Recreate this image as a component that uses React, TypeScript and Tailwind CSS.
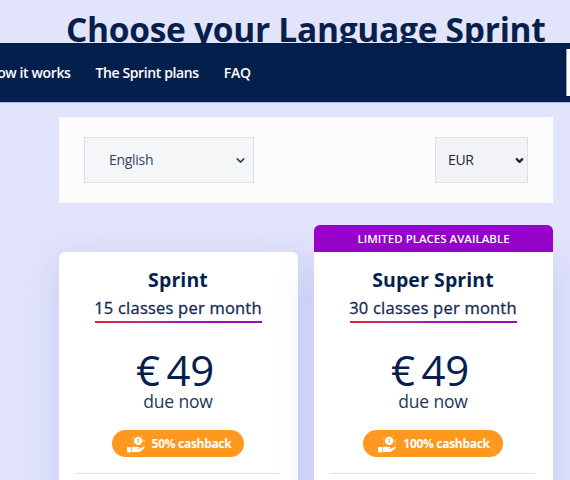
import { ChevronDown } from "lucide-react";

const CashbackIcon = () => (
  <svg width="20" height="20" viewBox="0 0 20 20" fill="none" className="shrink-0">
    <path d="M1 13h4v5.4H1z" fill="#fff" />
    <path
      d="M5.6 13.4c1.6-1.3 3-1.3 4.6-.3h2.3c1.2 0 1.2 1.7 0 1.7H10c1.3.5 2.6.5 3.8-.1l3.5-2c1.2-.5 2 .6 1.1 1.5l-4.2 3.3c-.6.4-1.2.6-2 .6H8.6l-3 .2z"
      fill="#fff"
    />
    <circle cx="12.2" cy="6.9" r="4.2" fill="#fff" />
    <path d="M13.4 5.6c-1.5-1-2.7.5-1.2 1.2s.4 2.4-1.3 1.3M12.2 4.5v4.8" stroke="#ffa63d" strokeWidth=".6" />
    <path d="M6.4 5.2c.3-1.4 1-2.3 2-3M15.8 1.6l1 1M18 5.4v2.8M17.4 10l.8.8M6.4 8.8l.4 1.1" stroke="#fff" strokeWidth=".7" />
  </svg>
);

type PlanProps = {
  name: string;
  classes: string;
  price: string;
  cashback: string;
  banner?: string;
};

const Plan = ({ name, classes, price, cashback, banner }: PlanProps) => (
  <div className="w-[239px]">
    {banner ? (
      <div className="h-[27px] rounded-t-md bg-[#9900cb] text-center text-[11.5px] leading-[28px] font-semibold text-white">
        <span>{banner}</span>
      </div>
    ) : (
      <div className="h-[27px]" />
    )}
    <div
      className={`flex h-[300px] flex-col items-center bg-white pt-[14px] pr-[17px] pl-4 shadow-[0_10px_36px_rgba(80,95,205,0.2)] ${banner ? "" : "rounded-t-md"}`}
    >
      <h2 className="text-[19.5px] leading-[28px] font-bold tracking-[0.1px]">{name}</h2>
      <div className="text-[16.5px] leading-[27px] tracking-[0.22px] text-[#14294f] [-webkit-text-stroke:0.3px]">{classes}</div>
      <div className="h-[2px] w-[167px] bg-linear-to-r from-[#dc2128] via-[#a414b0] to-[#8a12b5]" />
      <div className="mt-[24px] mr-[6px] text-[42px] leading-[46px] tracking-[-0.3px] [word-spacing:-4px]">{price}</div>
      <div className="-mt-[4px] text-[17.5px] leading-[24px] tracking-[-0.15px] text-[#26375a]">due now</div>
      <div className="mt-[17px] flex h-[27px] items-center gap-[6px] rounded-full bg-[#ff981f] pr-[13px] pl-[14px] text-[12px] font-bold tracking-[-0.3px] text-white">
        <CashbackIcon />
        <span className="mt-px">{cashback}</span>
      </div>
      <div className="mt-[16px] h-px w-full bg-[#e0e2e8]" />
    </div>
  </div>
);

const App = () => {
  return (
    <div className="h-[480px] w-[570px] overflow-hidden bg-[#e2e4fb] font-['Open_Sans',sans-serif] text-[#071f4c]">
      <div className="h-[43px] overflow-hidden pt-[9px] pl-[66px]">
        <h1 className="text-[33.5px] leading-[40px] font-bold tracking-[-0.28px] whitespace-nowrap">Choose your Language Sprint</h1>
      </div>

      <nav className="flex h-[59px] items-center justify-between bg-[#051f4c] text-[14px] font-semibold text-white shadow-[0_1px_0_#adbdeb]">
        <div className="-ml-[13px] flex gap-[25px] tracking-[-0.38px] whitespace-nowrap">
          <a>How it works</a>
          <a>The Sprint plans</a>
          <a className="tracking-[-0.3px]">FAQ</a>
        </div>
        <div className="h-[47px] w-[4px] border-l border-[#98a2bb] bg-white" />
      </nav>

      <main className="mt-[15px] ml-[59px] w-[494px]">
        <div className="flex h-[86px] items-center justify-between bg-[#fcfcfd] px-[25px]">
          <button className="flex h-[46px] w-[170px] items-center justify-between border border-[#d5e0eb] bg-[#f4f6f8] pr-[6px] pl-[24px] text-[14px] tracking-[-0.3px] text-[#304561]">
            <span className="-mt-[2px]">English</span>
            <ChevronDown size={13} strokeWidth={3} />
          </button>
          <button className="flex h-[46px] w-[93px] items-center justify-between border border-[#dce0e9] bg-[#f1f3f6] pr-[2px] pl-[12px] text-[14px] tracking-[-0.4px] text-[#202632]">
            <span className="-mt-[2px]">EUR</span>
            <ChevronDown size={11} strokeWidth={5} />
          </button>
        </div>

        <div className="mt-[22px] flex gap-4">
          <Plan name="Sprint" classes="15 classes per month" price="€ 49" cashback="50% cashback" />
          <Plan
            name="Super Sprint"
            classes="30 classes per month"
            price="€ 49"
            cashback="100% cashback"
            banner="LIMITED PLACES AVAILABLE"
          />
        </div>
      </main>
    </div>
  );
};

export default App;
